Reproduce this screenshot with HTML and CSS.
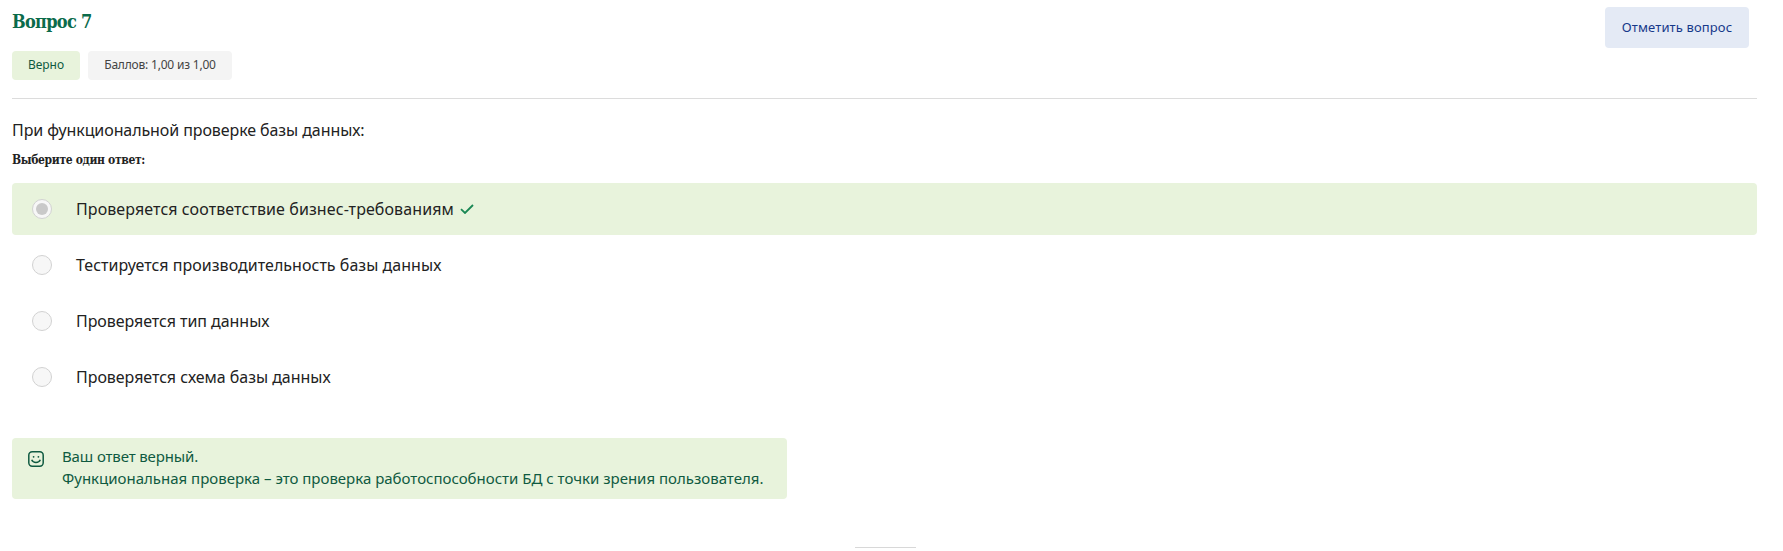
FILE: index.html
```html
<!DOCTYPE html>
<html lang="ru">
<head>
<meta charset="utf-8">
<title>Вопрос 7</title>
<link rel="stylesheet" href="styles.css">
</head>
<body>
<main class="question">
  <header class="head">
    <div class="info">
      <h3 class="title"><span>Вопрос 7</span></h3>
      <div class="badges">
        <div class="badge badge-correct"><span>Верно</span></div>
        <div class="badge badge-grade"><span>Баллов: 1,00 из 1,00</span></div>
      </div>
    </div>
    <button class="flag"><span>Отметить вопрос</span></button>
  </header>
  <p class="text"><span>При функциональной проверке базы данных:</span></p>
  <h4 class="prompt"><span>Выберите один ответ:</span></h4>
  <div class="answers">
    <div class="answer answer-correct"><i class="radio radio-checked"></i><span class="a1">Проверяется соответствие бизнес-требованиям</span>
      <svg class="check" viewBox="0 0 14 10"><path d="M1 5.2 5 9 13 1"/></svg></div>
    <div class="answer"><i class="radio"></i><span class="a2">Тестируется производительность базы данных</span></div>
    <div class="answer"><i class="radio"></i><span class="a3">Проверяется тип данных</span></div>
    <div class="answer"><i class="radio"></i><span class="a4">Проверяется схема базы данных</span></div>
  </div>
  <section class="feedback">
    <svg class="smile" viewBox="0 0 16 16"><rect x=".8" y=".8" width="14.4" height="14.4" rx="3.4"/><path d="M3.7 8.8C5.2 12.4 10.8 12.4 12.3 8.8"/><circle cx="5.6" cy="5.8" r=".9"/><circle cx="10.4" cy="5.8" r=".9"/></svg>
    <div><span class="f1">Ваш ответ верный.</span><br><span class="f2">Функциональная проверка – это проверка работоспособности БД с точки зрения пользователя.</span></div>
  </section>
  <hr class="end">
</main>
</body>
</html>
```
FILE: styles.css
```css
* { box-sizing: border-box; }
body { margin: 0; background: #fff; color: #222; font-family: "Noto Sans", sans-serif; overflow: hidden; }
.question { width: 1783px; padding: 0 26px 0 12px; }
.head { height: 99px; display: flex; justify-content: space-between; align-items: flex-start; padding: 7px 8px 0 0; border-bottom: 1px solid #dcdcdc; }
.title { margin: 2px 0 0; height: 25px; font: bold 18px/25px "DejaVu Serif Condensed", "DejaVu Serif", serif; letter-spacing: -0.7px; color: #0b6b4b; white-space: nowrap; }
.badges { display: flex; gap: 8px; margin-top: 17px; }
.badge { height: 29px; border-radius: 4px; font-size: 12px; line-height: 28px; text-align: center; white-space: nowrap; }
.badge-correct { width: 68px; background: #e8f3dc; color: #0f5a41; }
.badge-grade { width: 144px; background: #f4f4f4; color: #444; letter-spacing: -0.2px; }
.flag { width: 144px; height: 41px; padding: 0; border: 0; border-radius: 4px; background: #e4eaf5; color: #16398a; font: 13px/41px "Noto Sans", sans-serif; letter-spacing: 0.12px; white-space: nowrap; }
.text { margin: 17px 0 0; font-size: 16px; line-height: 28px; letter-spacing: -0.085px; }
.prompt { margin: 6px 0 0; font: bold 12px/20px "DejaVu Serif Condensed", "DejaVu Serif", serif; letter-spacing: -0.35px; color: #222; }
.answers { display: flex; flex-direction: column; gap: 4px; margin-top: 13px; }
.answer { height: 52px; display: flex; align-items: center; padding-left: 20px; border-radius: 4px; font-size: 16px; line-height: 28px; white-space: nowrap; }
.answer-correct { background: #e8f3dc; }
.a1 { letter-spacing: 0.095px; }
.a2 { letter-spacing: 0.035px; }
.a3 { letter-spacing: -0.05px; }
.a4 { letter-spacing: -0.04px; }
.radio { width: 20px; height: 20px; margin-right: 24px; flex: none; border: 1px solid #d2d2d2; border-radius: 50%; background: #f7f7f7; }
.radio-checked { display: grid; place-items: center; }
.radio-checked::before { content: ""; width: 12px; height: 12px; border-radius: 50%; background: #c9c9c9; }
.check { width: 14px; height: 10px; margin-left: 6px; fill: none; stroke: #198754; stroke-width: 1.8; }
.feedback { width: 775px; height: 61px; margin-top: 35px; padding: 7px 0 0 16px; display: flex; gap: 18px; border-radius: 4px; background: #e8f3dc; color: #0f5a41; font-size: 15px; line-height: 22px; white-space: nowrap; }
.f1 { letter-spacing: -0.13px; }
.smile { width: 16px; height: 16px; margin-top: 6px; fill: none; stroke: #0f5a41; stroke-width: 1.5; flex: none; }
.smile circle { fill: #0f5a41; stroke: none; }
.end { width: 61px; height: 1px; margin: 48px 0 0 843px; border: 0; background: #d8d8d8; }
```
